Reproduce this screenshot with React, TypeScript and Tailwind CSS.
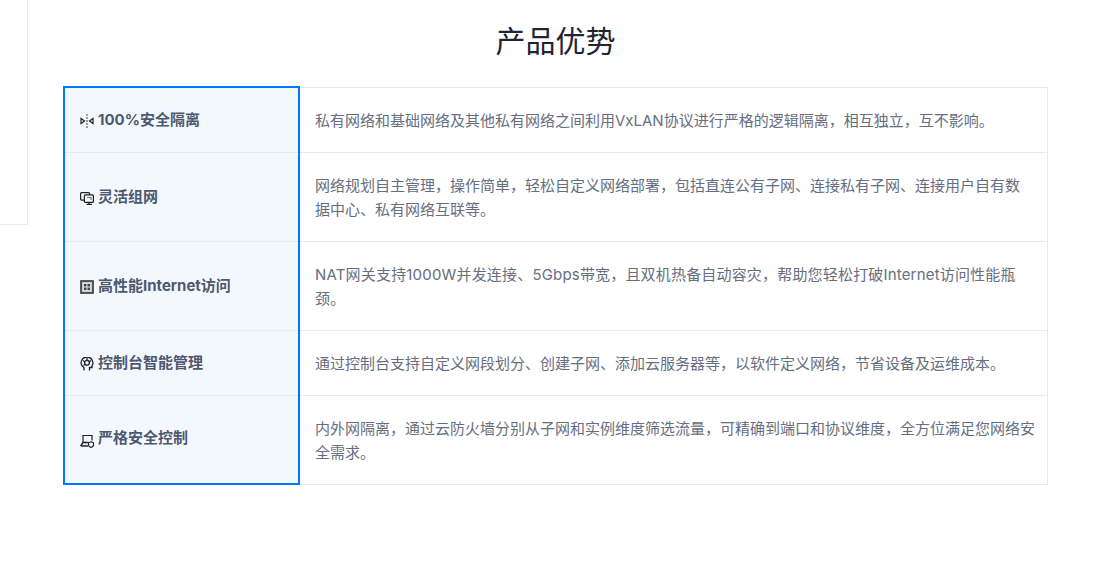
import type { ReactNode } from 'react';

const IsolateIcon = () => (
  <svg width="14" height="14" viewBox="0 0 14 14" fill="none" stroke="#222" strokeWidth="1.2">
    <path d="M1 4.500v5l3.500 -2.500z" />
    <path d="M13 4.500v5l-3.500 -2.500z" />
    <path d="M7 0v14" stroke="#888" strokeWidth="1.600" strokeDasharray="2 1" />
  </svg>
);

const NetworkIcon = () => (
  <svg width="14" height="14" viewBox="0 0 14 14" fill="none" stroke="#222" strokeWidth="1.200">
    <rect x="0.600" y="1.600" width="9" height="7.500" rx="1" />
    <rect x="4.400" y="3.900" width="9" height="7.500" rx="1" fill="#f3f8ff" />
    <path d="M6.500 13.400h5.500M9 11.500v2" strokeWidth="1.400" />
    <path d="M7 6.500h4v2.500" stroke="#777" />
  </svg>
);

const ChipIcon = () => (
  <svg width="14" height="14" viewBox="0 0 14 14" fill="none">
    <rect x="1" y="1" width="12" height="12" stroke="#333" strokeWidth="1.600" fill="#c9ccd1" />
    <rect x="3.500" y="3.500" width="7" height="7" fill="#e9ebee" />
    <rect x="4" y="4" width="2.500" height="2.500" fill="#444" />
    <rect x="7.500" y="4" width="2.500" height="2.500" fill="#444" />
    <rect x="4" y="7.500" width="2.500" height="2.500" fill="#444" />
    <rect x="7.500" y="7.500" width="2.500" height="2.500" fill="#444" />
  </svg>
);

const BrainIcon = () => (
  <svg width="14" height="14" viewBox="0 0 14 14" fill="none" stroke="#222" strokeWidth="1.300">
    <path d="M4 13.500v-2.800C2.200 9.500 1 8 1 6a6 6 0 0 1 12 0c0 1.200 -.4 2 -1 2.700V10.500h-2.500V13.500" />
    <circle cx="7" cy="5.800" r="2.400" />
    <path d="M7 1v2.500M3 3.500l2 1.500M11 3.500L9 5M3.500 8.500L5 7.500" />
  </svg>
);

const ControlIcon = () => (
  <svg width="14" height="14" viewBox="0 0 14 14" fill="none" stroke="#222" strokeWidth="1.200">
    <path d="M8.500 8.500H3V1.500h9v5" />
    <path d="M0.600 12l2.400 -3.500h5.500M0.600 12h7.400" strokeWidth="1.400" />
    <path d="M11 7.800l2.500 1v2.200c0 1.300 -1.200 2 -2.500 2.500c-1.300 -.5 -2.500 -1.200 -2.500 -2.500V8.800z" fill="#f3f8ff" />
  </svg>
);

interface Row {
  icon: ReactNode;
  title: string;
  lines: string[];
  height: string;
  textClass?: string;
  labelClass?: string;
}

const rows: Row[] = [
  {
    icon: <IsolateIcon />,
    title: '100%安全隔离',
    lines: ['私有网络和基础网络及其他私有网络之间利用VxLAN协议进行严格的逻辑隔离\uFF0C相互独立\uFF0C互不影响。'],
    height: 'h-[65px]',
  },
  {
    icon: <NetworkIcon />,
    title: '灵活组网',
    lines: [
      '网络规划自主管理\uFF0C操作简单\uFF0C轻松自定义网络部署\uFF0C包括直连公有子网、连接私有子网、连接用户自有数',
      '据中心、私有网络互联等。',
    ],
    height: 'h-[89px]',
  },
  {
    icon: <ChipIcon />,
    title: '高性能Internet访问',
    lines: ['NAT网关支持1000W并发连接、5Gbps带宽\uFF0C且双机热备自动容灾\uFF0C帮助您轻松打破Internet访问性能瓶', '颈。'],
    height: 'h-[89px]',
    textClass: 'tracking-[0.18px]',
  },
  {
    icon: <BrainIcon />,
    title: '控制台智能管理',
    lines: ['通过控制台支持自定义网段划分、创建子网、添加云服务器等\uFF0C以软件定义网络\uFF0C节省设备及运维成本。'],
    height: 'h-[65px]',
  },
  {
    icon: <ControlIcon />,
    title: '严格安全控制',
    lines: ['内外网隔离\uFF0C通过云防火墙分别从子网和实例维度筛选流量\uFF0C可精确到端口和协议维度\uFF0C全方位满足您网络安全需求。'],
    height: 'h-[88px]',
    labelClass: 'mb-[3px]',
  },
];

export default function App() {
  return (
    <div className="relative h-[563px] overflow-hidden bg-white font-['Inter','Noto_Sans_CJK_SC',sans-serif]">
      <div className="absolute left-0 top-0 h-[225px] w-[28px] border-b border-r border-[#e8ecf2]" />

      <h2 className="pt-[19px] text-center text-[30px] leading-[44px] font-normal text-[#1f2533]">产品优势</h2>

      <div className="relative mx-auto mt-[24px] w-[985px] border border-[#e6e9f0]">
        {rows.map((row, i) => (
          <div
            key={row.title}
            className={`flex ${row.height} ${i < rows.length - 1 ? 'border-b border-[#e6e9f0]' : ''}`}
          >
            <div className="flex w-[236px] shrink-0 items-center gap-[4px] bg-[#f3f8ff] pl-[16px]">
              <span className="mt-[2px] shrink-0">{row.icon}</span>
              <span className={`text-[15px] font-bold text-[#4e586e] ${row.labelClass ?? ''}`}>{row.title}</span>
            </div>
            <p className={`flex-1 self-center pl-[15px] pr-[10px] pt-[2px] text-[15px] leading-[24px] text-[#666e80] ${row.textClass ?? ''}`}>
              {row.lines.map((line, j) => (
                <span key={j} className="block">
                  {line}
                </span>
              ))}
            </p>
          </div>
        ))}
        <div className="absolute -left-px -top-[2px] h-[399px] w-[237px] border-2 border-[#0077ff]" />
      </div>
    </div>
  );
}
